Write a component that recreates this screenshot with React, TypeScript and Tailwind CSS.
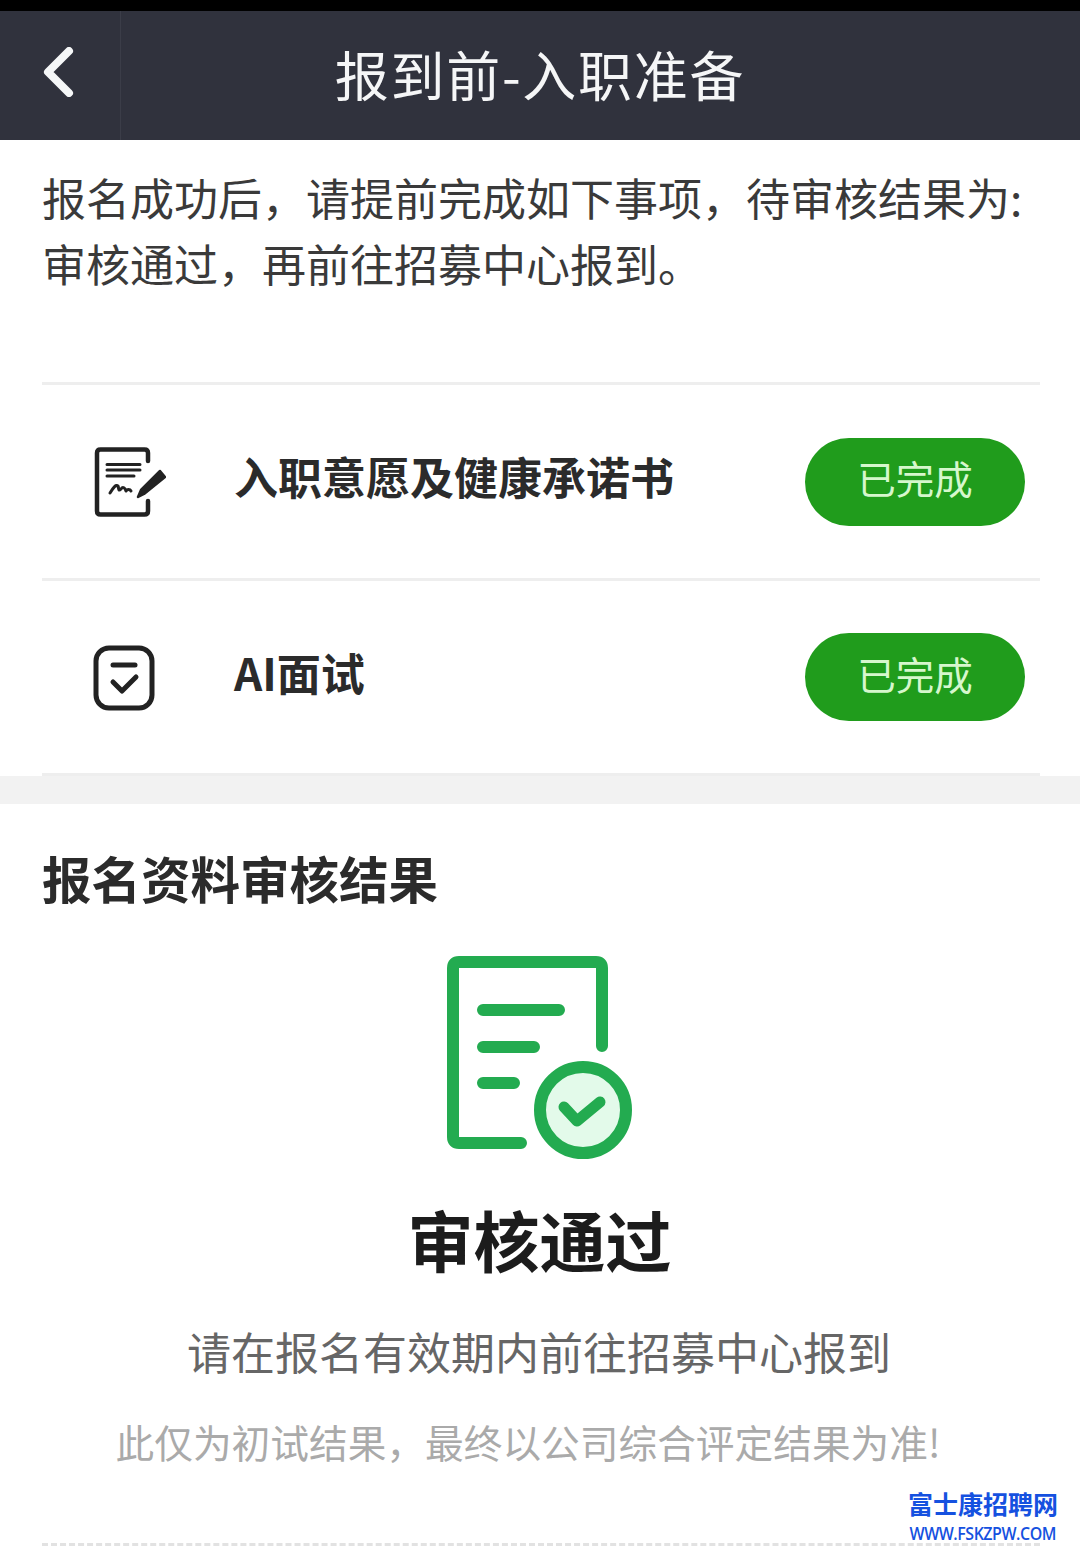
const cjk = "font-['Noto_Sans_CJK_SC','Noto_Sans',sans-serif]";

function SignIcon() {
  return (
    <svg width="72" height="72" viewBox="0 0 72 72" fill="none" stroke="#222" strokeLinecap="round" strokeLinejoin="round">
      <path d="M54 14 V6 Q54 2.500 50.500 2.500 H6.500 Q3 2.500 3 6 V64 Q3 67.500 6.500 67.500 H50.500 Q54 67.500 54 64 V54" strokeWidth="4.500" />
      <path d="M13 17.500 H46 M13 23 H46 M13 29 H40" strokeWidth="3" />
      <path d="M16 46 C19 41 22 37 24 39 C25 41 24 45 27 42 C29 39 31 41 32 44 C33 42 36 42 37 44" strokeWidth="3" />
      <path d="M50 47 L44 50 L47 43 L66 24 L71 30 Z" fill="#222" stroke="#222" strokeWidth="2.500" />
    </svg>
  );
}

function TaskIcon() {
  return (
    <svg width="64" height="66" viewBox="0 0 64 66" fill="none" stroke="#222" strokeLinecap="round" strokeLinejoin="round" className="-ml-[1px]">
      <rect x="3" y="3" width="56" height="60" rx="13" strokeWidth="5" />
      <path d="M20 20 H42" strokeWidth="5" />
      <path d="M20 37 L29 46 L43 32" strokeWidth="5" />
    </svg>
  );
}

function ResultIcon() {
  return (
    <svg width="186" height="204" viewBox="0 0 186 204" fill="none" strokeLinecap="round" strokeLinejoin="round" stroke="#23ab50">
      <path d="M155 90 V12 Q155 6 149 6 H12 Q6 6 6 12 V181 Q6 187 12 187 H74" strokeWidth="12" />
      <path d="M36 54 H112 M36 91 H87 M36 127 H67" strokeWidth="12" />
      <circle cx="136" cy="154" r="43" fill="#e3faea" strokeWidth="12" />
      <path d="M117 151 L130 165 L153 146" strokeWidth="11" />
    </svg>
  );
}

function TaskRow({ icon, label }: { icon: React.ReactNode; label: string }) {
  return (
    <div className="flex h-[195.5px] items-center border-b-[3px] border-[#eeeeee]">
      <div className="flex w-[192px] shrink-0 justify-start pl-[52px] pt-[3px]">{icon}</div>
      <div className="flex-1 pb-[10px] text-[44px] font-bold text-[#2b2b2b]">{label}</div>
      <div className="mr-[15px] mt-[1px] flex h-[88px] w-[220px] items-center justify-center rounded-full bg-[#209c1c] pb-[7px] text-[38.500px] text-[#d6f7cd]">
        已完成
      </div>
    </div>
  );
}

export default function App() {
  return (
    <div className={`relative h-[1556px] w-[1080px] overflow-hidden bg-white ${cjk}`}>
      <div className="h-[11px] bg-black" />
      <header className="flex h-[129px] items-center bg-[#30323d]">
        <div className="flex h-full w-[121px] shrink-0 items-center border-r border-[#3b3d48] pl-[42px] pb-[8px]">
          <svg width="34" height="50" viewBox="0 0 34 50" fill="none" stroke="#f5f7f8" strokeWidth="8" strokeLinecap="round" strokeLinejoin="round">
            <path d="M27 4 L6 25 L27 46" />
          </svg>
        </div>
        <h1 className="flex-1 pr-[121px] pb-[4px] text-center text-[54px] font-normal leading-none tracking-[1.700px] text-[#f5f6f7]">
          报到前-入职准备
        </h1>
      </header>

      <section className="pl-[42px] pr-[40px]">
        <p className="h-[242px] pt-[24px] text-[44px] leading-[66px] text-[#3a3a3a]">
          报名成功后，请提前完成如下事项，待审核结果为:
          <br />
          审核通过，再前往招募中心报到。
        </p>
        <div className="border-t-[3px] border-[#eeeeee]">
          <TaskRow icon={<SignIcon />} label="入职意愿及健康承诺书" />
          <TaskRow icon={<TaskIcon />} label="AI面试" />
        </div>
      </section>

      <div className="h-[28px] bg-[#f2f2f2]" />

      <section className="flex flex-col pl-[42px] pr-[40px]">
        <h2 className="pt-[40px] text-[49.500px] font-bold leading-[68px] text-[#2b2b2b]">报名资料审核结果</h2>
        <div className="flex justify-center pt-[44px] pr-[2px]">
          <ResultIcon />
        </div>
        <div className="pt-[33px] pr-[3px] text-center text-[66px] font-bold leading-[90px] text-[#1c1c1c]">审核通过</div>
        <div className="pt-[35px] pr-[4px] text-center text-[44px] leading-[66px] text-[#666666]">请在报名有效期内前往招募中心报到</div>
        <div className="pt-[29px] pr-[26px] text-center text-[38.700px] leading-[56px] text-[#aaaaaa]">此仅为初试结果，最终以公司综合评定结果为准!</div>
        <div className="mt-[74px] border-t-[3px] border-dashed border-[#e2e2e2]" />
      </section>

      <div className="absolute right-[22px] bottom-[9px] flex w-[150px] flex-col items-center text-[#1551e0]">
        <div className="text-[25px] font-bold leading-[32px]">富士康招聘网</div>
        <div className="scale-x-[0.885] whitespace-nowrap font-['Open_Sans',sans-serif] text-[18px] font-semibold leading-[28px] tracking-[-0.5px]">WWW.FSKZPW.COM</div>
      </div>
    </div>
  );
}
